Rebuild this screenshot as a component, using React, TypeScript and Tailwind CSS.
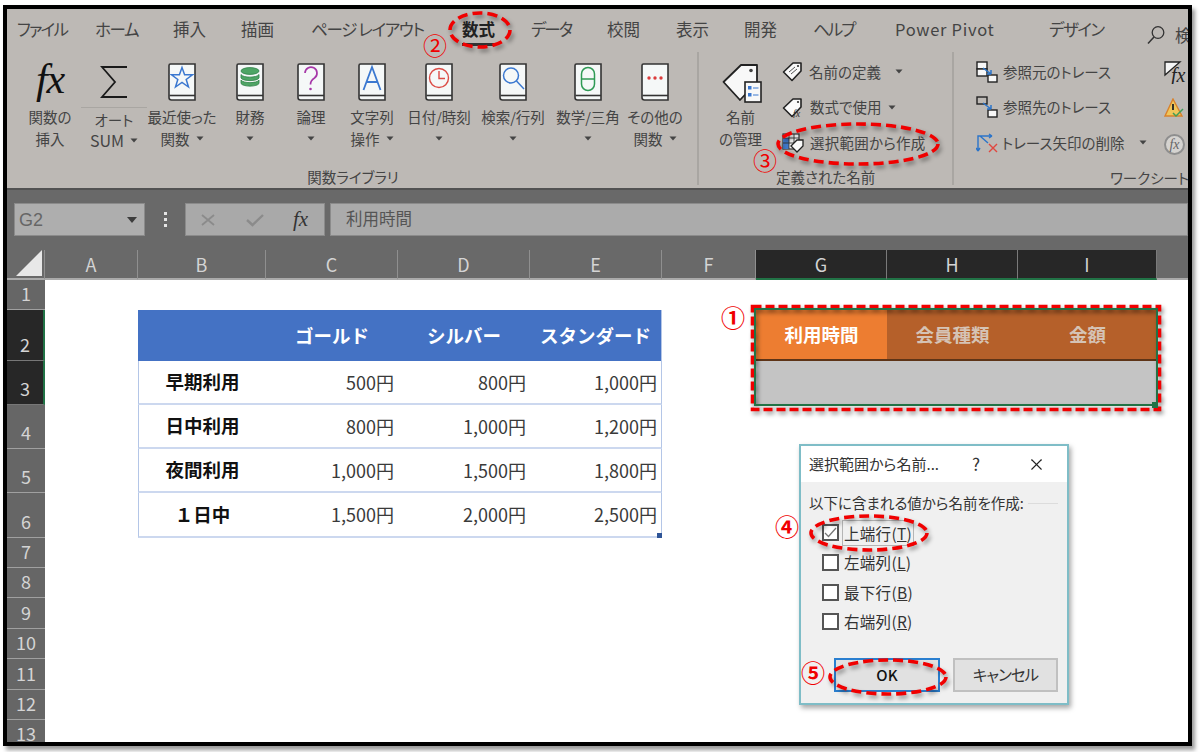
import { ReactNode } from "react"
import { X } from "lucide-react"

const tabs = [
  { label: "ファイル", width: "w-[78px]", text: "tracking-[-1.75px]" },
  { label: "ホーム", width: "w-[78px]", text: "tracking-[-1.3px]" },
  { label: "挿入", width: "w-[68px]", text: "" },
  { label: "描画", width: "w-[70px]", text: "" },
  { label: "ページ レイアウト", width: "w-[151px]", text: "tracking-[-1.3px]" },
  { label: "数式", width: "w-[69px]", text: "", active: true },
  { label: "データ", width: "w-[76px]", text: "tracking-[-2px]" },
  { label: "校閲", width: "w-[69px]", text: "" },
  { label: "表示", width: "w-[68px]", text: "" },
  { label: "開発", width: "w-[69px]", text: "" },
  { label: "ヘルプ", width: "w-[82px]", text: "tracking-[-2px]" },
  { label: "Power Pivot", width: "w-[154px]", text: "tracking-[0.7px]" },
  { label: "デザイン", width: "w-[98px]", text: "tracking-[-1.5px]" },
]

const columns = [
  { name: "A", width: 93 },
  { name: "B", width: 128 },
  { name: "C", width: 132 },
  { name: "D", width: 132 },
  { name: "E", width: 132 },
  { name: "F", width: 94 },
  { name: "G", width: 131, selected: true },
  { name: "H", width: 131, selected: true },
  { name: "I", width: 139, selected: true },
]

const priceRows = [
  { label: "早期利用", prices: ["500円", "800円", "1,000円"] },
  { label: "日中利用", prices: ["800円", "1,000円", "1,200円"] },
  { label: "夜間利用", prices: ["1,000円", "1,500円", "1,800円"] },
  { label: "１日中", prices: ["1,500円", "2,000円", "2,500円"] },
]

function Caret() {
  return (
    <svg width="8" height="5" viewBox="0 0 8 5" className="inline-block shrink-0">
      <path d="M0.5 0.5H7.5L4 4.5z" fill="#444" />
    </svg>
  )
}

function Book({ children }: { children: ReactNode }) {
  return (
    <svg width="28" height="38" viewBox="0 0 28 38">
      <path d="M1 34V2.5A1.5 1.5 0 0 1 2.5 1H27V37H3.5A2.5 2.5 0 0 1 1 34.5z" fill="#f5f8f8" stroke="#333" strokeWidth="1.6" />
      <path d="M1.5 32.5H27" stroke="#333" strokeWidth="1.6" />
      {children}
    </svg>
  )
}

function BigButton({ icon, lines, width, caret }: { icon: ReactNode; lines: string[]; width: string; caret?: boolean }) {
  return (
    <div className={`${width} shrink-0 flex flex-col items-center pt-[11px]`}>
      <div className="h-[44px] flex items-start justify-center">{icon}</div>
      <div className="whitespace-nowrap h-[21px] leading-[19px]">{lines[0]}</div>
      <div className="whitespace-nowrap h-[21px] leading-[21px] flex items-center gap-[6px]">
        {lines[1]}
        {caret && <Caret />}
      </div>
    </div>
  )
}

function TagIcon({ size = 21, children }: { size?: number; children?: ReactNode }) {
  return (
    <svg width={size} height={size} viewBox="0 0 21 21">
      <path d="M1.5 11L11 2H19V10L10 19.5z" fill="#fafafa" stroke="#222" strokeWidth="1.6" strokeLinejoin="round" />
      <circle cx="16" cy="5" r="1.1" fill="#333" />
      {children}
    </svg>
  )
}

function ListRow({ icon, label, caretGap, labelClass }: { icon: ReactNode; label: string; caretGap?: string; labelClass?: string }) {
  return (
    <div className="h-[35.5px] flex items-center whitespace-nowrap">
      <div className="w-[27px] shrink-0 flex">{icon}</div>
      <span className={labelClass}>{label}</span>
      {caretGap && <span className={`${caretGap} flex`}><Caret /></span>}
    </div>
  )
}

function TraceIcon({ kind }: { kind: "from" | "to" | "remove" }) {
  if (kind === "remove") {
    return (
      <svg width="22" height="22" viewBox="0 0 22 22">
        <path d="M2 19V4H16M4 4L12 11M2 19L0 16M2 19L4 16M16 4L13 2M16 4L13 6" fill="none" stroke="#2b74c9" strokeWidth="1.4" />
        <path d="M13 12L21 20M21 12L13 20" stroke="#e0473f" strokeWidth="1.4" />
      </svg>
    )
  }
  const first = kind === "from"
  return (
    <svg width="22" height="22" viewBox="0 0 22 22">
      <rect x="1" y="1" width="10" height="7" fill={first ? "#f7f7f7" : "#bdb9b5"} stroke="#222" strokeWidth="1.4" />
      <rect x="1" y="8" width="10" height="7" fill="#f7f7f7" stroke="#222" strokeWidth="1.4" opacity={first ? 1 : 0} />
      <rect x="12" y="14" width="9" height="7" fill="#f7f7f7" stroke="#222" strokeWidth="1.4" />
      <path d="M7 7L15 13M15 13V9M15 13H11" fill="none" stroke="#2b74c9" strokeWidth="1.5" />
    </svg>
  )
}

function RibbonTabs() {
  return (
    <div className="h-[43px] flex pl-[10px] text-[16.5px] leading-[22px] pt-[9px] text-[#444] whitespace-nowrap">
      {tabs.map((tab) => (
        <div key={tab.label} className={`${tab.width} ${tab.text} shrink-0`}>
          {tab.active ? (
            <span className="relative inline-block font-bold text-[#222]">
              {tab.label}
              <span className="absolute left-0 right-0 top-[25px] h-[3px] bg-[#333]" />
            </span>
          ) : (
            tab.label
          )}
        </div>
      ))}
      <div className="flex items-center gap-[10px]">
        <svg width="18" height="20" viewBox="0 0 18 20">
          <circle cx="11" cy="7.5" r="5.8" fill="none" stroke="#333" strokeWidth="1.3" />
          <path d="M7 12L1 18.5" stroke="#333" strokeWidth="1.5" />
        </svg>
        <span>検索</span>
      </div>
    </div>
  )
}

function FunctionGroup() {
  return (
    <div className="w-[692px] shrink-0 flex flex-col border-r-2 border-[#a9a6a2]">
      <div className="flex-1 flex pl-[12px]">
        <BigButton
          width="w-[62px]"
          lines={["関数の", "挿入"]}
          icon={<span className="font-['Liberation_Serif',serif] italic text-[42px] leading-[32px] text-[#111] tracking-tight">fx</span>}
        />
        <div className="w-[66px] shrink-0 flex flex-col items-center pt-[13px]">
          <div className="h-[43px] w-full border-b border-[#a9a6a2] flex justify-center">
            <svg width="28" height="34" viewBox="0 0 28 34">
              <path d="M27 2H2L15 17L2 32H27" fill="none" stroke="#1a1a1a" strokeWidth="1.8" />
            </svg>
          </div>
          <div className="h-[22px] leading-[23px]">オート</div>
          <div className="h-[21px] leading-[21px] flex items-center gap-[6px] text-[16px]">SUM<Caret /></div>
        </div>
        <BigButton
          width="w-[70px]"
          lines={["最近使った", "関数"]}
          caret
          icon={
            <Book>
              <path d="M14 4.5L16.6 11.8H24.5L18.2 16.5L20.5 24L14 19.5L7.5 24L9.8 16.5L3.5 11.8H11.4z" fill="none" stroke="#3b78d0" strokeWidth="1.5" />
            </Book>
          }
        />
        <BigButton
          width="w-[66px]"
          lines={["財務", ""]}
          caret
          icon={
            <Book>
              <g fill="#4ea565" stroke="#2f8047" strokeWidth="0.8">
                <ellipse cx="14" cy="8" rx="9" ry="3.4" />
                <path d="M5 11.5C7 15 21 15 23 11.5V15C21 18.5 7 18.5 5 15z" />
                <path d="M5 17C7 20.5 21 20.5 23 17V20.5C21 24 7 24 5 20.5z" />
              </g>
            </Book>
          }
        />
        <BigButton
          width="w-[56px]"
          lines={["論理", ""]}
          caret
          icon={
            <Book>
              <path d="M8 10A6 6 0 1 1 17.5 15C15 16.5 13.5 18 13.5 21.5" fill="none" stroke="#a637a8" strokeWidth="1.7" />
              <circle cx="13.5" cy="26" r="1.3" fill="#a637a8" />
            </Book>
          }
        />
        <BigButton
          width="w-[66px]"
          lines={["文字列", "操作"]}
          caret
          icon={
            <Book>
              <path d="M5.5 27L14 4L22.5 27M8.5 19H19.5" fill="none" stroke="#3b78d0" strokeWidth="1.8" />
            </Book>
          }
        />
        <BigButton
          width="w-[68px]"
          lines={["日付/時刻", ""]}
          caret
          icon={
            <Book>
              <circle cx="14" cy="15" r="9.5" fill="none" stroke="#dc4c46" strokeWidth="1.4" />
              <path d="M14 8V15.5H20" fill="none" stroke="#dc4c46" strokeWidth="1.4" />
            </Book>
          }
        />
        <BigButton
          width="w-[80px]"
          lines={["検索/行列", ""]}
          caret
          icon={
            <Book>
              <circle cx="12" cy="12.5" r="7.5" fill="none" stroke="#3b78d0" strokeWidth="1.5" />
              <path d="M17.5 18L25 26" stroke="#3b78d0" strokeWidth="1.5" />
            </Book>
          }
        />
        <BigButton
          width="w-[70px]"
          lines={["数学/三角", ""]}
          caret
          icon={
            <Book>
              <rect x="7.5" y="4.5" width="13" height="23" rx="6.5" fill="none" stroke="#2f9a55" strokeWidth="1.5" />
              <path d="M7.5 16H20.5" stroke="#2f9a55" strokeWidth="1.5" />
            </Book>
          }
        />
        <BigButton
          width="w-[64px]"
          lines={["その他の", "関数"]}
          caret
          icon={
            <Book>
              <circle cx="8" cy="15" r="1.7" fill="#dc3c3c" />
              <circle cx="14" cy="15" r="1.7" fill="#dc3c3c" />
              <circle cx="20" cy="15" r="1.7" fill="#dc3c3c" />
            </Book>
          }
        />
      </div>
      <div className="h-[24px] leading-[31px] text-center pl-[2px]">関数ライブラリ</div>
    </div>
  )
}

function NamesGroup() {
  return (
    <div className="w-[255px] shrink-0 flex flex-col border-r-2 border-[#a9a6a2]">
      <div className="flex-1 flex">
        <div className="w-[83px] shrink-0 flex flex-col items-center pt-[11px]">
          <div className="h-[44px] relative w-[42px]">
            <svg width="42" height="40" viewBox="0 0 42 40" className="ml-[2px]">
              <path d="M1.5 19L19 2H35V19L18 37z" fill="#f8f8f8" stroke="#222" strokeWidth="1.8" strokeLinejoin="round" />
              <circle cx="29" cy="7.5" r="1.8" fill="#444" />
              <rect x="23" y="19" width="16" height="20" fill="#f8f8f8" stroke="#222" strokeWidth="1.6" />
              <rect x="26" y="23" width="3.5" height="3.5" fill="#3b78d0" />
              <rect x="26" y="30" width="3.5" height="3.5" fill="#3b78d0" />
              <path d="M31 25H36.5M31 32H36.5" stroke="#3b78d0" strokeWidth="1.2" />
            </svg>
          </div>
          <div className="h-[21px] leading-[19px]">名前</div>
          <div className="h-[21px] leading-[21px] whitespace-nowrap">の管理</div>
        </div>
        <div className="pt-[2px]">
          <ListRow
            label="名前の定義"
            caretGap="ml-[14px]"
            icon={
              <TagIcon>
                <path d="M7 11L13 6M9 13L15 8" stroke="#555" strokeWidth="1" />
              </TagIcon>
            }
          />
          <ListRow
            label="数式で使用"
            labelClass="ml-[1px]"
            caretGap="ml-[7px]"
            icon={
              <TagIcon>
                <text x="11" y="20" fontFamily="Liberation Serif" fontStyle="italic" fontSize="10" fill="#333">fx</text>
              </TagIcon>
            }
          />
          <ListRow
            label="選択範囲から作成"
            labelClass="ml-[1px] tracking-[0.25px]"
            icon={
              <svg width="22" height="20" viewBox="0 0 22 20">
                <rect x="1" y="1" width="16" height="15" fill="#f1f1f1" stroke="#333" strokeWidth="1.2" />
                <rect x="1" y="5" width="6" height="11" fill="#3f78c8" />
                <path d="M7 1V16M12 1V10M1 5H17M1 10H12" stroke="#333" strokeWidth="0.9" />
                <path d="M9 13L15 7H21V13L15 19z" fill="#fafafa" stroke="#222" strokeWidth="1.3" />
              </svg>
            }
          />
        </div>
      </div>
      <div className="h-[24px] leading-[31px] pl-[77px]">定義された名前</div>
    </div>
  )
}

function AuditGroup() {
  return (
    <div className="flex-1 min-w-0 flex flex-col overflow-hidden">
      <div className="flex-1 flex pl-[22px] pt-[2px]">
        <div className="w-[188px] shrink-0">
          <ListRow label="参照元のトレース" icon={<TraceIcon kind="from" />} />
          <ListRow label="参照先のトレース" icon={<TraceIcon kind="to" />} />
          <ListRow label="トレース矢印の削除" labelClass="-ml-[1px]" caretGap="ml-[14px]" icon={<TraceIcon kind="remove" />} />
        </div>
        <div className="flex flex-col shrink-0">
          <div className="h-[36px] flex items-center">
            <svg width="22" height="24" viewBox="0 0 22 24">
              <path d="M1 2H16L1 15z" fill="#f5f5f5" stroke="#222" strokeWidth="1.3" />
              <text x="7" y="22" fontFamily="Liberation Serif" fontStyle="italic" fontSize="20" fill="#222">fx</text>
            </svg>
          </div>
          <div className="h-[36px] flex items-center">
            <svg width="22" height="20" viewBox="0 0 22 20">
              <path d="M9 1L18 18H1z" fill="#f0c65a" stroke="#d9822b" strokeWidth="1.4" />
              <path d="M9 6V12" stroke="#222" strokeWidth="1.8" />
              <path d="M9 15L12 18L19 11" fill="none" stroke="#3f9d57" strokeWidth="1.5" />
            </svg>
          </div>
          <div className="h-[36px] flex items-center">
            <div className="w-[21px] h-[21px] rounded-full border-2 border-[#8e8e8e] bg-[#d5d3d0] flex items-center justify-center font-['Liberation_Serif',serif] italic text-[14px] text-[#666]">fx</div>
          </div>
        </div>
      </div>
      <div className="h-[24px] leading-[31px] pl-[156px] whitespace-nowrap">ワークシート分析</div>
    </div>
  )
}

function FormulaBar() {
  return (
    <div className="h-[62px] bg-[#696969] border-t-2 border-[#525252] pt-[13px] flex pl-[7px]">
      <div className="w-[131px] h-[33px] bg-[#aeaeae] border border-[#8b8b8b] flex items-center justify-between pl-[4px] pr-[7px] text-[18px] text-[#666] font-['Liberation_Sans',sans-serif]">
        <span className="mt-[2px]">G2</span>
        <svg width="10" height="6" viewBox="0 0 10 6"><path d="M0 0H10L5 6z" fill="#3d3d3d" /></svg>
      </div>
      <div className="w-[40px] h-[33px] flex flex-col items-center justify-center gap-[3px]">
        <span className="w-[3px] h-[3px] bg-[#e5e5e5]" />
        <span className="w-[3px] h-[3px] bg-[#e5e5e5]" />
        <span className="w-[3px] h-[3px] bg-[#e5e5e5]" />
      </div>
      <div className="w-[140px] h-[33px] bg-[#a9a9a9] border border-[#8b8b8b] flex items-center pl-[14px]">
        <svg width="16" height="14" viewBox="0 0 16 14">
          <path d="M2 2L14 12M14 2L2 12" stroke="#8b8b8b" strokeWidth="1.8" />
        </svg>
        <svg width="18" height="14" viewBox="0 0 18 14" className="ml-[30px]">
          <path d="M1 7L6.5 12L17 2" fill="none" stroke="#8b8b8b" strokeWidth="2.4" />
        </svg>
        <span className="ml-[29px] font-['Liberation_Serif',serif] italic text-[21px] leading-none text-[#333]">fx</span>
      </div>
      <div className="flex-1 ml-[5px] h-[33px] bg-[#ababab] border border-[#8b8b8b] flex items-center pl-[15px] pb-[3px] text-[16.5px] text-[#555]">
        利用時間
      </div>
    </div>
  )
}

function Sheet() {
  const rowHeights = [30, 51, 44, 44, 44, 45, 30, 30, 31, 30, 31, 30, 30]
  return (
    <div className="flex-1 min-h-0 overflow-hidden grid grid-cols-[38px_93px_128px_132px_132px_132px_94px_131px_131px_139px_1fr] grid-rows-[30px_30px_51px_44px_44px_44px_45px_30px_30px_31px_30px_31px_30px_30px] bg-white">
      {/* column headers */}
      <div className="bg-[#696969] border-b-2 border-[#aaaaaa] border-r border-r-[#8f8f8f] flex items-end justify-end pr-[2px] pb-[2px]">
        <div className="w-0 h-0 border-l-[26px] border-l-transparent border-b-[26px] border-b-[#e8e8e8]" />
      </div>
      {columns.map((col) => (
        <div
          key={col.name}
          className={
            col.selected
              ? "bg-[#272727] border-b-2 border-[#217346] border-r border-r-[#7a7a7a] flex items-center justify-center text-[18px] text-[#d4d4d4]"
              : "bg-[#696969] border-b-2 border-[#aaaaaa] border-r border-r-[#8f8f8f] flex items-center justify-center text-[18px] text-[#d4d4d4]"
          }
        >
          {col.name}
        </div>
      ))}
      <div className="bg-[#696969] border-b-2 border-[#aaaaaa]" />

      {/* rows */}
      {rowHeights.map((_, i) => {
        const row = i + 1
        const selected = row === 2 || row === 3
        return (
          <div
            key={row}
            style={{ gridColumn: 1, gridRow: row + 1 }}
            className={
              selected
                ? "bg-[#272727] border-r-2 border-r-[#217346] border-b border-b-[#777777] flex items-end justify-center pb-[5px] text-[18px] leading-[22px] text-[#d4d4d4]"
                : "bg-[#666666] border-b border-b-[#a0a0a0] flex items-end justify-center pb-[5px] text-[18px] leading-[22px] text-[#d4d4d4]"
            }
          >
            {row}
          </div>
        )
      })}

      {/* price table, B2:E6 */}
      <div className="col-[3] row-[3] bg-[#4472c4]" />
      <div className="col-[4] row-[3] bg-[#4472c4] flex items-center justify-center text-[18.5px] font-bold text-white [font-feature-settings:normal]">ゴールド</div>
      <div className="col-[5] row-[3] bg-[#4472c4] flex items-center justify-center text-[18.5px] font-bold text-white [font-feature-settings:normal]">シルバー</div>
      <div className="col-[6] row-[3] bg-[#4472c4] border-r border-[#b4c6e7] flex items-center justify-center text-[18.5px] font-bold text-white whitespace-nowrap [font-feature-settings:normal]">スタンダード</div>
      {priceRows.map((item, i) => (
        <div key={item.label} className="contents">
          <div
            style={{ gridColumn: 3, gridRow: i + 4 }}
            className="border-l border-b-2 border-l-[#b4c6e7] border-b-[#ccd8ef] flex items-center justify-center text-[18.5px] font-bold text-[#111] [font-feature-settings:normal]"
          >
            {item.label}
          </div>
          {item.prices.map((price, j) => (
            <div
              key={j}
              style={{ gridColumn: j + 4, gridRow: i + 4 }}
              className={
                j === 2
                  ? "relative border-r border-b-2 border-r-[#b4c6e7] border-b-[#ccd8ef] flex items-center justify-end pr-[4px] text-[18px] text-[#3a3a3a]"
                  : "border-b-2 border-b-[#ccd8ef] flex items-center justify-end pr-[4px] text-[18px] text-[#3a3a3a]"
              }
            >
              {price}
              {j === 2 && i === 3 && <span className="absolute right-[-1px] bottom-[-2px] w-[5px] h-[5px] bg-[#2f5597]" />}
            </div>
          ))}
        </div>
      ))}

      {/* selected range G2:I3 */}
      <div className="col-[8] row-[3] bg-[#ed7d31] border-b-2 border-[#5e3417] flex items-center justify-center text-[18.5px] font-bold text-white">利用時間</div>
      <div className="col-[9] row-[3] bg-[#b5602a] border-b-2 border-[#5e3417] flex items-center justify-center text-[18.5px] font-bold text-[#d5c3b5]">会員種類</div>
      <div className="col-[10] row-[3] bg-[#b5602a] border-b-2 border-[#5e3417] flex items-center justify-center text-[18.5px] font-bold text-[#d5c3b5]">金額</div>
      <div className="col-[8/11] row-[4] bg-[#c4c4c4]" />
    </div>
  )
}

function NameDialog() {
  const options = [
    { label: "上端行(", key: "T", checked: true },
    { label: "左端列(", key: "L" },
    { label: "最下行(", key: "B" },
    { label: "右端列(", key: "R" },
  ]
  return (
    <div className="absolute left-[799px] top-[444px] w-[270px] h-[261px] border-2 border-[#7fbdc7] bg-[#f0f0f0] shadow-[2px_3px_5px_rgba(0,0,0,0.35)] flex flex-col text-[15.5px] text-[#333]">
      <div className="h-[36px] bg-white flex items-center pl-[8px] shrink-0">
        <span className="w-[163px] whitespace-nowrap text-[15px]">選択範囲から名前...</span>
        <span className="w-[55px] text-[17px]">?</span>
        <X size={19} strokeWidth={1.4} className="text-[#222]" />
      </div>
      <div className="flex items-center pl-[8px] pt-[10px] h-[32px] whitespace-nowrap text-[14.5px]">
        以下に含まれる値から名前を作成:
        <span className="ml-[4px] w-[30px] h-px bg-[#dcdcdc]" />
      </div>
      <div className="pl-[21px] pt-[4px] flex flex-col">
        {options.map((opt) => (
          <div key={opt.key} className="h-[29.7px] flex items-center">
            <span className="w-[17px] h-[17px] border-2 border-[#555] bg-white flex items-center justify-center shrink-0">
              {opt.checked && (
                <svg width="13" height="11" viewBox="0 0 13 11">
                  <path d="M1 6L4.5 9.5L12 1" fill="none" stroke="#777" strokeWidth="1.3" />
                </svg>
              )}
            </span>
            <span className={opt.checked ? "ml-[3px] px-[1px] h-[26px] leading-[24px] border border-[#b5b5b5] whitespace-nowrap tracking-[0.3px]" : "ml-[4px] px-px whitespace-nowrap tracking-[0.3px]"}>
              {opt.label}
              <span className="underline">{opt.key}</span>)
            </span>
          </div>
        ))}
      </div>
      <div className="mt-auto flex pl-[33px] pb-[11px] gap-[13px]">
        <div className="w-[106px] h-[34px] bg-[#e1e1e1] border-2 border-[#2a7fd0] flex items-center justify-center text-[15px] text-[#111] font-medium">OK</div>
        <div className="w-[105px] h-[34px] bg-[#e1e1e1] border-2 border-[#c0c0c0] flex items-center justify-center tracking-[-1px]">キャンセル</div>
      </div>
    </div>
  )
}

function Annotations() {
  return (
    <>
      <svg
        width="1200"
        height="752"
        viewBox="0 0 1200 752"
        fill="none"
        className="absolute left-0 top-0 pointer-events-none drop-shadow-[2px_3px_2px_rgba(0,0,0,0.4)]"
      >
        <g stroke="#f00000" strokeWidth="3.6" strokeDasharray="10 5">
          <ellipse cx="480" cy="30" rx="30" ry="17" />
          <ellipse cx="858" cy="144" rx="80" ry="20" />
          <ellipse cx="869" cy="533" rx="58" ry="17" />
          <ellipse cx="888" cy="677" rx="58" ry="17" />
          <rect x="752.5" y="306.5" width="407" height="103" strokeDasharray="9 4" />
        </g>
        <g stroke="#217346" strokeWidth="2">
          <rect x="755" y="309" width="402" height="96" />
        </g>
        <rect x="1152" y="402" width="6" height="6" fill="#217346" />
      </svg>
      <span className="absolute left-[721px] top-[299px] text-[24px] leading-[36px] font-bold text-[#f00000]">①</span>
      <span className="absolute left-[423px] top-[27px] text-[24px] leading-[36px] text-[#f00000]">②</span>
      <span className="absolute left-[753px] top-[142px] text-[24px] leading-[36px] text-[#f00000]">③</span>
      <span className="absolute left-[775px] top-[508px] text-[24px] leading-[36px] font-bold text-[#f00000]">④</span>
      <span className="absolute left-[801px] top-[654px] text-[24px] leading-[36px] font-bold text-[#f00000]">⑤</span>
    </>
  )
}

export default function App() {
  return (
    <div className="relative w-[1200px] h-[752px] bg-white overflow-hidden font-['Noto_Sans_CJK_JP','Noto_Sans',sans-serif] [font-feature-settings:'palt']">
      <div className="absolute left-[3px] top-[5px] w-[1189px] h-[741px] border-4 border-black shadow-[3px_4px_4px_rgba(0,0,0,0.4)] flex flex-col overflow-hidden">
        <div className="h-[179px] shrink-0 bg-[#bdb9b5] flex flex-col">
          <RibbonTabs />
          <div className="flex-1 min-h-0 flex text-[14.5px] text-[#444] pb-[3px]">
            <FunctionGroup />
            <NamesGroup />
            <AuditGroup />
          </div>
        </div>
        <FormulaBar />
        <Sheet />
      </div>
      <NameDialog />
      <Annotations />
    </div>
  )
}
